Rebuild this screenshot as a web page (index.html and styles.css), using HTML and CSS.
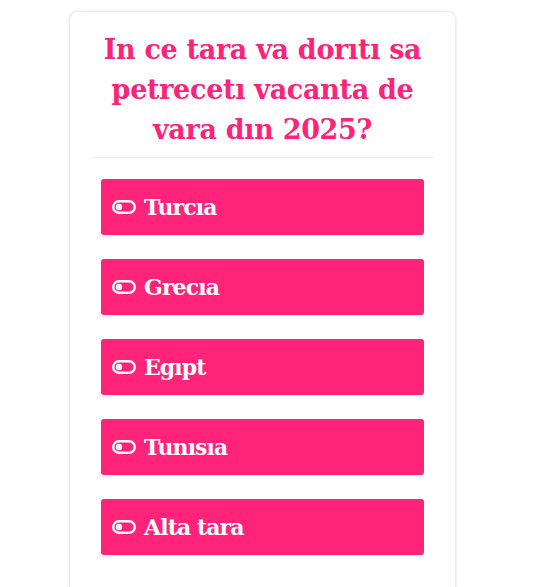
FILE: index.html
```html
<!DOCTYPE html>
<html lang="ro">
<head>
    <meta charset="UTF-8">
    <meta name="viewport" content="width=device-width, initial-scale=1.0">
    <title>Sondaj vacanta</title>
    <link rel="stylesheet" href="styles.css">
</head>
<body>
    <div class="poll">
        <h1 class="poll-title">In ce tara va dorıtı sa petrecetı vacanta de vara dın 2025?</h1>
        <hr class="poll-sep">
        <div class="poll-options">
            <button class="poll-option" type="button">
                <svg class="toggle" viewBox="0 0 24 14" width="24" height="14"><rect x="1.2" y="1.2" width="21.6" height="11.6" rx="5.8" fill="none" stroke="#fff" stroke-width="2.4"/><circle cx="7" cy="7" r="3.2" fill="#fff"/></svg>
                Turcıa
            </button>
            <button class="poll-option" type="button">
                <svg class="toggle" viewBox="0 0 24 14" width="24" height="14"><rect x="1.2" y="1.2" width="21.6" height="11.6" rx="5.8" fill="none" stroke="#fff" stroke-width="2.4"/><circle cx="7" cy="7" r="3.2" fill="#fff"/></svg>
                Grecıa
            </button>
            <button class="poll-option" type="button">
                <svg class="toggle" viewBox="0 0 24 14" width="24" height="14"><rect x="1.2" y="1.2" width="21.6" height="11.6" rx="5.8" fill="none" stroke="#fff" stroke-width="2.4"/><circle cx="7" cy="7" r="3.2" fill="#fff"/></svg>
                Egıpt
            </button>
            <button class="poll-option" type="button">
                <svg class="toggle" viewBox="0 0 24 14" width="24" height="14"><rect x="1.2" y="1.2" width="21.6" height="11.6" rx="5.8" fill="none" stroke="#fff" stroke-width="2.4"/><circle cx="7" cy="7" r="3.2" fill="#fff"/></svg>
                Tunısıa
            </button>
            <button class="poll-option" type="button">
                <svg class="toggle" viewBox="0 0 24 14" width="24" height="14"><rect x="1.2" y="1.2" width="21.6" height="11.6" rx="5.8" fill="none" stroke="#fff" stroke-width="2.4"/><circle cx="7" cy="7" r="3.2" fill="#fff"/></svg>
                Alta tara
            </button>
        </div>
    </div>
</body>
</html>
```

FILE: styles.css
```css
* {
    box-sizing: border-box;
}

body {
    font-family: "DejaVu Serif", serif;
    background-color: #fff;
    margin: 0;
    padding: 0;
}

.poll {
    width: 385px;
    margin: 12px 0 0 70px;
    padding: 18px 22px 40px;
    background-color: #fff;
    border-radius: 8px;
    box-shadow: 0 0 4px rgba(0, 0, 0, 0.18);
}

.poll-title {
    margin: 0;
    padding: 0 8px;
    color: #ff2479;
    font-size: 27px;
    font-weight: bold;
    line-height: 40px;
    letter-spacing: -0.3px;
    text-align: center;
}

.poll-sep {
    margin: 7px 0 21px;
    border: none;
    border-top: 1px solid #eee;
}

.poll-options {
    display: flex;
    flex-direction: column;
    gap: 24px;
    padding: 0 9px;
}

.poll-option {
    display: flex;
    align-items: center;
    gap: 8px;
    height: 56px;
    padding: 0 10px 0 11px;
    background-color: #ff2479;
    color: #fff;
    border: none;
    border-radius: 3px;
    font-family: inherit;
    font-size: 22px;
    font-weight: bold;
    letter-spacing: -0.9px;
    text-align: left;
    cursor: pointer;
}
```
